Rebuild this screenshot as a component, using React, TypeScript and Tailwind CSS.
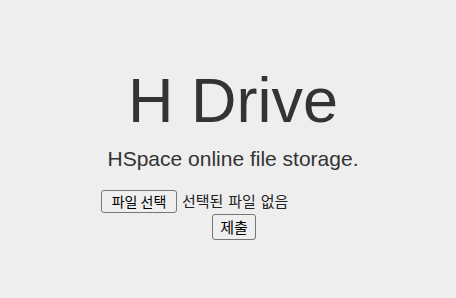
export default function App() {
  return (
    <div
      className="min-h-[298px] w-full bg-[#eeeeee] text-[#333333] flex flex-col items-center pl-[10px]"
      style={{ fontFamily: '"Liberation Sans", Arial, sans-serif' }}
    >
      <h1 className="mt-[64px] text-[63px] leading-[72px] font-normal">H Drive</h1>
      <p className="mt-[11px] text-[21px] leading-[24px]">HSpace online file storage.</p>
      <div
        className="mt-[19px] flex w-[264px] items-center"
        style={{ fontFamily: '"Noto Sans CJK KR", "Noto Sans", sans-serif' }}
      >
        <button className="flex h-[23px] w-[76px] items-center justify-center rounded-[3px] border border-[#767676] bg-[#efefef] text-[14px] text-black">
          파일 선택
        </button>
        <span className="ml-[5px] text-[15px] text-[#222] [word-spacing:1.5px]">선택된 파일 없음</span>
      </div>
      <button
        className="mt-[1px] ml-[2px] flex h-[26px] w-[44px] items-center justify-center rounded-[3px] border border-[#767676] bg-[#efefef] text-[15px] text-black"
        style={{ fontFamily: '"Noto Sans CJK KR", "Noto Sans", sans-serif' }}
      >
        제출
      </button>
    </div>
  );
}
